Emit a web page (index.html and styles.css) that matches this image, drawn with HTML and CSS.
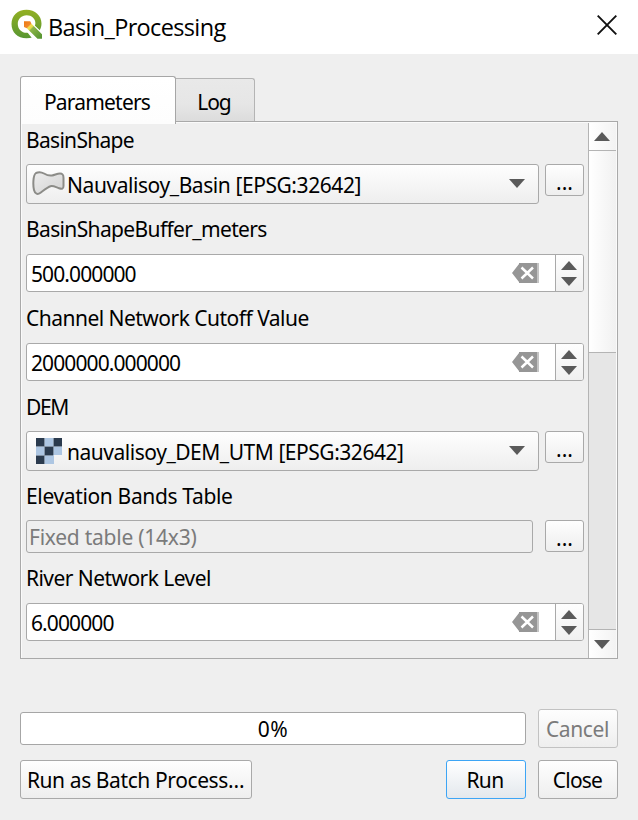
FILE: index.html
```html
<!DOCTYPE html>
<html lang="en">
<head>
<meta charset="utf-8">
<title>Basin_Processing</title>
<link rel="stylesheet" href="styles.css">
</head>
<body>
<svg class="defs" aria-hidden="true">
  <defs>
    <symbol id="clear" viewBox="0 0 27 20"><path d="M0 10 7 1V0h19v20H7v-1z" fill="#969696"/><path d="M25 0h2v20h-2z" fill="#c4c4c4"/><path d="M9.500 4.500 21 15.500M21 4.500 9.500 15.500" stroke="#fff" stroke-width="2.500"/></symbol>
    <symbol id="up" viewBox="0 0 16 9"><path d="M8 0l8 9H0z" fill="#5a5a5a"/></symbol>
    <symbol id="down" viewBox="0 0 16 9"><path d="M0 0h16L8 9z" fill="#5a5a5a"/></symbol>
  </defs>
</svg>
<header class="titlebar">
  <svg class="logo" viewBox="0 0 31 30">
    <defs>
      <linearGradient id="g" x1="0" y1="0" x2="0" y2="1"><stop offset="0" stop-color="#93b023"/><stop offset="1" stop-color="#589632"/></linearGradient>
      <linearGradient id="h" gradientUnits="userSpaceOnUse" x1="13" y1="13" x2="29" y2="29"><stop offset="0" stop-color="#ee7913"/><stop offset=".26" stop-color="#f08a2c"/><stop offset=".3" stop-color="#f3dc50"/><stop offset=".4" stop-color="#e6dc4a"/><stop offset=".46" stop-color="#8db548"/><stop offset="1" stop-color="#589632"/></linearGradient>
    </defs>
    <path fill="url(#g)" fill-rule="evenodd" d="M15.500.700C24 .7 30.500 6.700 30.500 14.500c0 2.600-.7 5-2 7L23.700 17c.5-1 .7-2 .7-3 0-4.400-3.800-7.800-8.700-7.800-5.200 0-8.900 3.600-8.900 8.700s3.700 8.800 8.900 8.800h1.700l4.600 4.600c-2 .7-4.200 1-6.500 1C6.600 29.300.500 23.500.500 15S6.600.7 15.500.7z"/>
    <path fill="#fff" d="M16 19.300 25.500 30h-3.800L14.500 21zM20 13l9.500 9 1.500 2.500L20 15z"/>
    <path fill="url(#h)" d="M13 12.300h6.200l1.300 2.500L31 25.300V29.800h-4.500L15.800 19.300 13 18z"/>
  </svg>
  <h1 class="title">Basin_Processing</h1>
  <svg class="close" viewBox="0 0 20 20"><path d="M.7.700l18.600 18.600M19.300.7.700 19.300" stroke="#111" stroke-width="1.900"/></svg>
</header>
<main class="dialog">
  <nav class="tabs">
    <div class="tab active"><span class="t-param">Parameters</span></div>
    <div class="tab"><span class="t-log">Log</span></div>
  </nav>
  <section class="pane">
    <div class="form">
      <label class="label l-shape">BasinShape</label>
      <div class="row">
        <div class="combo">
          <svg class="poly" viewBox="0 0 33 24"><defs><linearGradient id="p" x1="0" y1="0" x2="1" y2="1"><stop offset="0" stop-color="#eee"/><stop offset="1" stop-color="#d2d2d2"/></linearGradient></defs><path d="M4 2C6 1 9.500 1 12 2.500S17 5 20 4.500 25 2.500 28 2.500 31.500 4 31.500 7v8C31.500 18 30 18.200 27 17.200S21 14.500 18.500 15.200 11.500 19.500 8.500 21.700 3 23 2 19 .8 4 4 2z" fill="url(#p)" stroke="#8c8c88" stroke-width="2"/></svg>
          <span class="v-shape">Nauvalisoy_Basin [EPSG:32642]</span>
          <svg class="arrow"><use href="#down"/></svg>
        </div>
        <button class="btn more">...</button>
      </div>
      <label class="label l-buffer">BasinShapeBuffer_meters</label>
      <div class="spin">
        <span class="v-num">500.000000</span>
        <svg class="clear"><use href="#clear"/></svg>
        <div class="steps"><svg class="arrow"><use href="#up"/></svg><svg class="arrow"><use href="#down"/></svg></div>
      </div>
      <label class="label l-channel">Channel Network Cutoff Value</label>
      <div class="spin">
        <span class="v-num">2000000.000000</span>
        <svg class="clear"><use href="#clear"/></svg>
        <div class="steps"><svg class="arrow"><use href="#up"/></svg><svg class="arrow"><use href="#down"/></svg></div>
      </div>
      <label class="label l-dem">DEM</label>
      <div class="row">
        <div class="combo">
          <svg class="raster" viewBox="0 0 27 26"><path d="M0 0h26v17h-8v9H0z" fill="#adc6e2"/><path d="M0 0h8v8H0zM18 0h8v8h-8zM9 9h8v8H9zM0 18h8v8H0z" fill="#2b3b4e"/><path d="M0 8.500h26M0 17.500h17M8.500 0v26M17.500 0v17" stroke="#8494a6" stroke-width="1"/></svg>
          <span class="v-dem">nauvalisoy_DEM_UTM [EPSG:32642]</span>
          <svg class="arrow"><use href="#down"/></svg>
        </div>
        <button class="btn more">...</button>
      </div>
      <label class="label l-elev">Elevation Bands Table</label>
      <div class="row wide">
        <div class="fixed"><span class="v-fixed">Fixed table (14x3)</span></div>
        <button class="btn more">...</button>
      </div>
      <label class="label l-river">River Network Level</label>
      <div class="spin">
        <span class="v-num">6.000000</span>
        <svg class="clear"><use href="#clear"/></svg>
        <div class="steps"><svg class="arrow"><use href="#up"/></svg><svg class="arrow"><use href="#down"/></svg></div>
      </div>
    </div>
    <div class="scroll">
      <div class="end top"><svg class="arrow"><use href="#up"/></svg></div>
      <div class="thumb"></div>
      <div class="track"></div>
      <div class="end"><svg class="arrow"><use href="#down"/></svg></div>
    </div>
  </section>
  <div class="actions first">
    <div class="progress"><span class="pct">0%</span></div>
    <button class="btn std" disabled><span class="b-cancel">Cancel</span></button>
  </div>
  <div class="actions">
    <button class="btn batch"><span class="b-batch">Run as Batch Process…</span></button>
    <button class="btn std run"><span class="b-run">Run</span></button>
    <button class="btn std"><span class="b-close">Close</span></button>
  </div>
</main>
</body>
</html>
```
FILE: styles.css
```css
* { box-sizing: border-box; }
body {
  margin: 0;
  width: 638px;
  height: 820px;
  overflow: hidden;
  background: #efefef;
  color: #000;
  font: 21px/26px "Noto Sans", "Open Sans", sans-serif;
  white-space: nowrap;
}
svg { display: block; flex: none; }
.defs { position: absolute; width: 0; height: 0; }
.titlebar { display: flex; height: 54px; background: #fff; padding: 9px 21px 0 11px; }
.logo { width: 31px; height: 30px; }
.title { margin: 0 0 0 6px; font: 23.5px/36px "Open Sans", sans-serif; letter-spacing: -.65px; }
.close { width: 20px; height: 20px; margin: 6px 0 0 auto; }
.dialog { padding: 22px 20px 0; }
.tabs { display: flex; align-items: flex-start; height: 45px; }
.tab {
  display: flex; align-items: center; justify-content: center;
  width: 79px; height: 43px; margin-top: 2px;
  background: linear-gradient(#e9e9e9, #e6e6e6 60%, #dcdcdc);
  border: 1px solid #b4b4b4; border-left: 0; border-bottom: 0;
  border-radius: 0 3px 0 0; padding: 4px 2px 0 0;
}
.tab.active {
  position: relative; z-index: 1;
  width: 156px; height: 48px; margin-top: 0; padding: 2px 2px 0 0;
  background: linear-gradient(#fff, #fdfdfd);
  border: 1px solid #a6a6a6; border-bottom: 0; border-radius: 3px 3px 0 0;
}
.t-param { letter-spacing: -.8px; }
.t-log { letter-spacing: -1.1px; }
.pane {
  display: flex; height: 538px;
  border: 1px solid #a9a9a9; box-shadow: inset 1px 1px #fafafa, inset -1px 0 #fafafa;
}
.form { width: 567px; padding: 5px 4px 0 5px; }
.label { display: block; height: 26px; margin: 12px 0; }
.label:first-child { margin: 0 0 11px; }
.label.l-channel { margin-top: 13px; }
.label.l-dem { margin: 13px 0 11px; }
.label.l-elev { margin: 12px 0 11px; }
.l-shape { letter-spacing: -.7px; }
.l-buffer { letter-spacing: -.64px; }
.l-channel { letter-spacing: -.52px; }
.l-river { letter-spacing: -.56px; }
.l-dem { letter-spacing: -1.4px; }
.l-elev { letter-spacing: -.35px; }
.v-shape { letter-spacing: -.43px; }
.v-dem { letter-spacing: -.47px; }
.v-num { letter-spacing: -.9px; }
.v-fixed { letter-spacing: -.25px; }
.b-batch, .b-cancel { letter-spacing: -.4px; margin-right: 1px; }
.b-run { letter-spacing: -.6px; margin-right: 2px; }
.b-close { letter-spacing: -.8px; margin-right: 1px; }
.pct { letter-spacing: .5px; }
.row { display: flex; gap: 6px; align-items: flex-start; }
.row.wide { gap: 12px; }
.btn, .combo {
  border: 1px solid #a9a9a9; border-radius: 3px;
  background: linear-gradient(#fefefe, #eee);
}
.btn {
  display: flex; align-items: center; justify-content: center;
  height: 39px; padding: 1px 0 0; color: #000; font: inherit;
}
.more { width: 39px; height: 32px; padding-top: 4px; }
.combo { display: flex; align-items: center; width: 513px; height: 40px; padding: 0 13px 0 5px; }
.combo .arrow { margin: -2px 0 0 auto; }
.combo span { padding-top: 2px; }
.arrow { width: 16px; height: 9px; }
.poly { width: 33px; height: 24px; margin: -3px 2px 0 0; }
.raster { width: 27px; height: 26px; margin: 0 4px 0 4px; }
.spin {
  display: flex; align-items: center; height: 38px; overflow: hidden;
  background: #fff; border: 1px solid #a9a9a9; border-radius: 3px; padding-left: 4px;
}
.spin span { padding-top: 2px; }
.clear { width: 27px; height: 20px; margin: 0 16px 0 auto; }
.steps {
  display: flex; flex-direction: column; align-items: center; gap: 7px;
  width: 28px; height: 36px; padding: 6px 1px 0 0; border-left: 1px solid #a9a9a9;
  background: linear-gradient(#fefefe, #f0f0f0);
}
.fixed {
  display: flex; align-items: center; width: 507px; height: 33px; padding: 1px 0 0 2px;
  border: 1px solid #a9a9a9; border-radius: 3px; color: #7b7b7b;
}
.scroll { display: flex; flex-direction: column; width: 29px; border-left: 1px solid #b4b4b4; margin: 1px 1px 0 0; }
.end { display: flex; align-items: center; justify-content: center; height: 28px; padding-right: 1px; background: linear-gradient(90deg, #fff, #f3f3f3); }
.end.top { height: 27px; }
.thumb { height: 203px; border: solid #b4b4b4; border-width: 1px 0; background: linear-gradient(90deg, #fff, #f1f1f1); }
.track { flex: 1; background: #e6e6e6; border-bottom: 1px solid #b4b4b4; }
.actions { display: flex; align-items: center; gap: 12px; margin-top: 12px; }
.actions.first { margin-top: 50px; }
.progress {
  display: flex; align-items: center; justify-content: center; width: 506px; height: 33px;
  background: #fff; border: 1px solid #a6a6a6; border-radius: 3px; padding-top: 1px;
}
.std { width: 80px; }
.btn:disabled { color: #7b7b7b; border-color: #c2c2c2; }
.batch { width: 232px; margin-right: auto; }
.run { border-color: #3da5f5; background: linear-gradient(#fff, #e3e8ed); }
```
